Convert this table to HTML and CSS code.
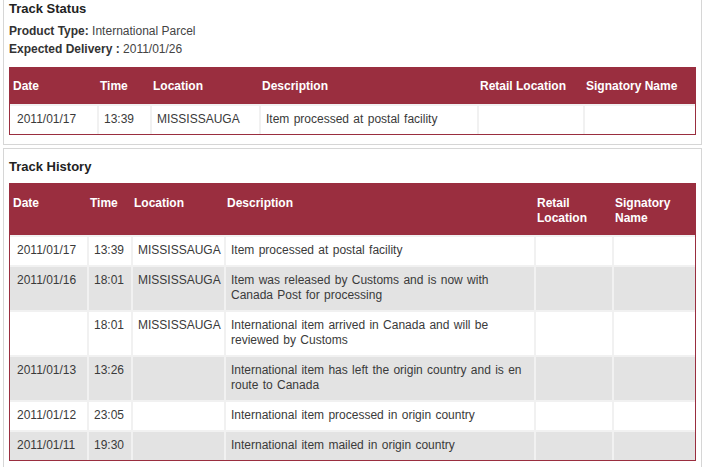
FILE: index.html
```html
<!DOCTYPE html>
<html lang="en">
<head>
<meta charset="utf-8">
<title>Track</title>
<link rel="stylesheet" href="styles.css">
</head>
<body>
<div class="page">
  <section class="panel panel-status">
    <h2 class="panel-title">Track Status</h2>
    <div class="info">
      <div class="info-line"><b>Product Type:</b> International Parcel</div>
      <div class="info-line"><b>Expected Delivery :</b> 2011/01/26</div>
    </div>
    <table class="track status-table">
      <colgroup>
        <col class="s-date"><col class="s-time"><col class="s-loc"><col class="s-desc"><col class="s-retail"><col class="s-sig">
      </colgroup>
      <thead>
        <tr><th>Date</th><th>Time</th><th>Location</th><th>Description</th><th>Retail Location</th><th>Signatory Name</th></tr>
      </thead>
      <tbody>
        <tr><td>2011/01/17</td><td>13:39</td><td>MISSISSAUGA</td><td>Item processed at postal facility</td><td></td><td></td></tr>
      </tbody>
    </table>
  </section>

  <section class="panel panel-history">
    <h2 class="panel-title">Track History</h2>
    <table class="track history-table">
      <colgroup>
        <col class="h-date"><col class="h-time"><col class="h-loc"><col class="h-desc"><col class="h-retail"><col class="h-sig">
      </colgroup>
      <thead>
        <tr><th>Date</th><th>Time</th><th>Location</th><th>Description</th><th>Retail Location</th><th>Signatory Name</th></tr>
      </thead>
      <tbody>
        <tr><td>2011/01/17</td><td>13:39</td><td>MISSISSAUGA</td><td>Item processed at postal facility</td><td></td><td></td></tr>
        <tr class="alt"><td>2011/01/16</td><td>18:01</td><td>MISSISSAUGA</td><td>Item was released by Customs and is now with Canada Post for processing</td><td></td><td></td></tr>
        <tr><td></td><td>18:01</td><td>MISSISSAUGA</td><td>International item arrived in Canada and will be reviewed by Customs</td><td></td><td></td></tr>
        <tr class="alt"><td>2011/01/13</td><td>13:26</td><td></td><td>International item has left the origin country and is en route to Canada</td><td></td><td></td></tr>
        <tr><td>2011/01/12</td><td>23:05</td><td></td><td>International item processed in origin country</td><td></td><td></td></tr>
        <tr class="alt"><td>2011/01/11</td><td>19:30</td><td></td><td>International item mailed in origin country</td><td></td><td></td></tr>
      </tbody>
    </table>
  </section>
</div>
</body>
</html>
```

FILE: styles.css
```css
html, body {
  margin: 0;
  padding: 0;
  background: #ffffff;
}

body {
  font-family: "Liberation Sans", Arial, sans-serif;
  font-size: 12px;
  line-height: 15px;
  color: #3a3a3a;
}

.page {
  padding: 0 2px 0 3px;
}

.panel {
  border: 1px solid #d6d6d6;
  padding: 0 5px 9px 5px;
}

.panel-status {
  border-top: none;
  padding-top: 1px;
}

.panel-history {
  margin-top: 3px;
  padding-top: 10px;
  border-bottom: none;
  padding-bottom: 40px;
}

.panel-title {
  margin: 0;
  font-size: 13px;
  line-height: 16px;
  font-weight: bold;
  color: #222222;
}

.info {
  margin-top: 6px;
  line-height: 17px;
  color: #444444;
}

.info-line + .info-line {
  margin-top: 1px;
}

.info-line b {
  color: #333333;
}

.track {
  width: 100%;
  table-layout: fixed;
  border-collapse: separate;
  border-spacing: 0;
  border: 1px solid #9a2e3f;
  border-top: none;
}

.status-table {
  margin-top: 9px;
}

.history-table {
  margin-top: 8px;
}

.track th {
  background: #9a2e3f;
  color: #ffffff;
  font-weight: bold;
  text-align: left;
  vertical-align: top;
  padding: 12px 4px 10px 3px;
}

.history-table th {
  padding-top: 13px;
  padding-bottom: 9px;
}

.track td {
  border-top: 2px solid #f1f1f1;
  border-left: 2px solid #f1f1f1;
  padding: 6px 4px 7px 5px;
  vertical-align: top;
  background: #ffffff;
  word-spacing: 1px;
}

.track td:first-child {
  border-left: none;
  padding-left: 7px;
}

.track tr.alt td {
  background: #e3e3e3;
}

.s-date { width: 87px; }
.s-time { width: 53px; }
.s-loc { width: 109px; }
.s-desc { width: 218px; }
.s-retail { width: 106px; }
.s-sig { width: 112px; }

.h-date { width: 77px; }
.h-time { width: 44px; }
.h-loc { width: 93px; }
.h-desc { width: 310px; }
.h-retail { width: 78px; }
.h-sig { width: 83px; }
```
